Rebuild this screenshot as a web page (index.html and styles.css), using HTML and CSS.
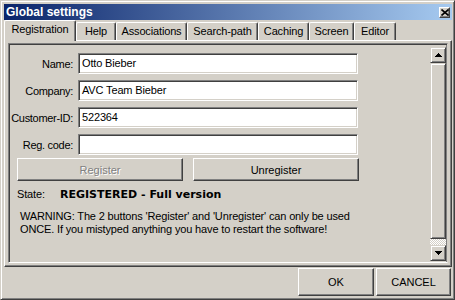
FILE: index.html
```html
<!DOCTYPE html>
<html>
<head>
<meta charset="utf-8">
<link rel="stylesheet" href="styles.css">
</head>
<body>
<div class="window">
  <div class="titlebar">
    <span class="title">Global settings</span>
    <span class="close"><svg width="8" height="7" viewBox="0 0 8 7"><path d="M0.5 0.5 L7.5 6.5 M7.5 0.5 L0.5 6.5" stroke="#000" stroke-width="1.6" fill="none"/></svg></span>
  </div>
  <div class="tabs">
    <div class="tab tab-active tab-reg">Registration</div>
    <div class="tab tab-help">Help</div>
    <div class="tab tab-assoc">Associations</div>
    <div class="tab tab-search">Search-path</div>
    <div class="tab tab-cache">Caching</div>
    <div class="tab tab-screen">Screen</div>
    <div class="tab tab-editor">Editor</div>
  </div>
  <div class="pane">
    <div class="frame">
      <div class="form">
        <div class="fields">
          <label class="lbl">Name:</label><div class="input">Otto Bieber</div>
          <label class="lbl">Company:</label><div class="input">AVC Team Bieber</div>
          <label class="lbl">Customer-ID:</label><div class="input">522364</div>
          <label class="lbl">Reg. code:</label><div class="input"></div>
        </div>
        <div class="btnrow">
          <button class="btn btn-wide btn-disabled">Register</button>
          <button class="btn btn-wide">Unregister</button>
        </div>
        <div class="state">
          <span class="state-label">State:</span>
          <span class="state-value">REGISTERED - Full version</span>
        </div>
        <p class="warning">WARNING: The 2 buttons 'Register' and 'Unregister' can only be used<br>ONCE. If you mistyped anything you have to restart the software!</p>
      </div>
      <div class="vscroll">
        <div class="sbtn"><svg width="7" height="4" viewBox="0 0 7 4" shape-rendering="crispEdges"><path d="M3 0h1v1h1v1h1v1h1v1H0V3h1V2h1V1h1z" fill="#000"/></svg></div>
        <div class="thumb"></div>
        <div class="track"></div>
        <div class="sbtn"><svg width="7" height="4" viewBox="0 0 7 4" shape-rendering="crispEdges"><path d="M0 0h7v1H6v1H5v1H4v1H3V3H2V2H1V1H0z" fill="#000"/></svg></div>
      </div>
    </div>
  </div>
  <div class="footer">
    <button class="btn btn-ok">OK</button>
    <button class="btn btn-cancel">CANCEL</button>
  </div>
</div>
</body>
</html>
```
FILE: styles.css
```css
body {
  margin: 0;
  background: #d4d0c8;
  font: 11px "Liberation Sans", Arial, sans-serif;
  letter-spacing: -0.15px;
  color: #000;
}
.window {
  width: 455px;
  height: 300px;
  box-sizing: border-box;
  border: 1px solid;
  border-color: #d4d0c8 #404040 #404040 #d4d0c8;
  box-shadow: inset 1px 1px #fff, inset -1px -1px #808080;
  padding: 3px 2px 1px 3px;
  display: flex;
  flex-direction: column;
  background: #d4d0c8;
}
.titlebar {
  height: 16px;
  flex: none;
  display: flex;
  align-items: center;
  justify-content: space-between;
  padding-left: 2px;
  background: linear-gradient(to right, #0a246a, #a6caf0);
  color: #fff;
}
.title {
  font: bold 12px "Liberation Sans", Arial, sans-serif;
  letter-spacing: 0;
  line-height: 16px;
}
.close {
  width: 11px;
  height: 11px;
  box-sizing: border-box;
  margin-right: 2px;
  background: #d4d0c8;
  border: 1px solid;
  border-color: #fff #404040 #404040 #fff;
  box-shadow: inset -1px -1px #808080;
  display: flex;
  align-items: center;
  justify-content: center;
}
.close svg { display: block; }
.tabs {
  height: 20px;
  flex: none;
  display: flex;
  align-items: flex-end;
}
.tab {
  height: 18px;
  box-sizing: border-box;
  border-top: 1px solid #fff;
  border-left: 1px solid #fff;
  border-right: 1px solid #404040;
  box-shadow: inset -1px 0 #808080;
  border-radius: 2px 2px 0 0;
  padding-top: 2px;
  line-height: 13px;
  text-align: center;
  white-space: nowrap;
  background: #d4d0c8;
}
.tab-active {
  height: 21px;
  margin-bottom: -1px;
  position: relative;
  z-index: 1;
}
.tab-reg { width: 72px; }
.tab-help { width: 40px; }
.tab-assoc { width: 71px; }
.tab-search { width: 71px; }
.tab-cache { width: 51px; }
.tab-screen { width: 45px; }
.tab-editor { width: 42px; }
.pane {
  height: 227px;
  flex: none;
  box-sizing: border-box;
  border-top: 1px solid #fff;
  border-left: 1px solid #fff;
  border-right: 1px solid #404040;
  border-bottom: 1px solid #404040;
  box-shadow: inset -1px -1px #808080;
  padding: 2px 3px 3px 3px;
}
.frame {
  width: 440px;
  height: 220px;
  box-sizing: border-box;
  border: 1px solid;
  border-color: #808080 #d4d0c8 #fff #808080;
  box-shadow: inset 1px 1px #404040, inset -1px 0 #808080;
  padding: 1px;
  display: flex;
}
.form {
  flex: 1;
  padding-top: 8px;
}
.fields {
  display: grid;
  grid-template-columns: 63px 280px;
  column-gap: 5px;
  row-gap: 6px;
  align-items: center;
}
.lbl {
  text-align: right;
  white-space: nowrap;
  letter-spacing: -0.3px;
}
.input {
  height: 21px;
  box-sizing: border-box;
  background: #fff;
  border: 1px solid;
  border-color: #808080 #fff #fff #808080;
  box-shadow: inset 1px 1px #404040, inset -1px -1px #d4d0c8;
  padding: 0 3px;
  line-height: 19px;
  white-space: nowrap;
}
.btn {
  font: inherit;
  color: #000;
  background: #d4d0c8;
  border: 1px solid;
  border-color: #fff #404040 #404040 #fff;
  box-shadow: inset -1px -1px #808080;
  padding: 0;
  margin: 0;
}
.btnrow {
  display: flex;
  gap: 10px;
  margin-top: 3px;
  padding-left: 7px;
}
.btn-wide {
  width: 166px;
  height: 23px;
}
.btn-disabled {
  color: #808080;
  text-shadow: 1px 1px #fff;
}
.state {
  display: flex;
  align-items: baseline;
  margin-top: 7px;
  padding-left: 7px;
  line-height: 13px;
}
.state-label {
  width: 43px;
}
.state-value {
  font: bold 11px "DejaVu Sans", Verdana, sans-serif;
  letter-spacing: 0;
  line-height: 13px;
}
.warning {
  margin: 9px 0 0 10px;
  line-height: 13px;
}
.vscroll {
  width: 16px;
  margin-top: 2px;
  display: flex;
  flex-direction: column;
}
.sbtn, .thumb {
  box-sizing: border-box;
  border: 1px solid;
  border-color: #d4d0c8 #404040 #404040 #d4d0c8;
  box-shadow: inset 1px 1px #fff, inset -1px -1px #808080;
  background: #d4d0c8;
}
.sbtn {
  height: 16px;
  display: flex;
  align-items: center;
  justify-content: center;
}
.sbtn svg { display: block; }
.thumb {
  height: 176px;
}
.track {
  flex: 1;
  background: repeating-conic-gradient(#d4d0c8 0 25%, #fff 0 50%) 0 0 / 2px 2px;
}
.footer {
  flex: none;
  display: flex;
  justify-content: flex-end;
  gap: 2px;
  margin-top: 1px;
  padding-right: 1px;
}
.btn-ok {
  width: 76px;
  height: 28px;
}
.btn-cancel {
  width: 75px;
  height: 28px;
}
```
